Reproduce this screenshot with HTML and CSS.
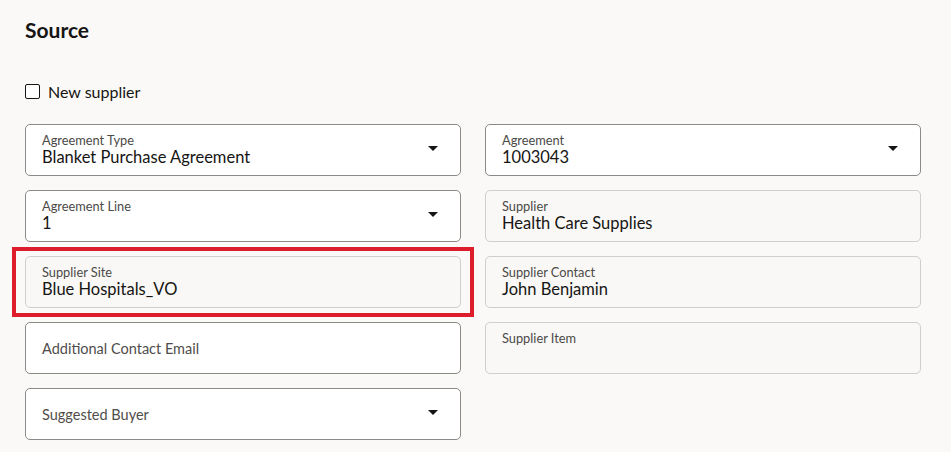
FILE: index.html
```html
<!DOCTYPE html>
<html lang="en">
<head>
  <meta charset="UTF-8">
  <meta name="viewport" content="width=device-width, initial-scale=1.0">
  <title>Source</title>
  <link rel="stylesheet" href="styles.css">
</head>
<body>
  <div class="page">
    <h1>Source</h1>
    <label class="check">
      <span class="box"></span>
      New supplier
    </label>
    <section class="fields">
      <div class="field select">
        <div class="text">
          <span class="label">Agreement Type</span>
          <span class="value">Blanket Purchase Agreement</span>
        </div>
        <span class="arrow"></span>
      </div>
      <div class="field select">
        <div class="text">
          <span class="label">Agreement</span>
          <span class="value">1003043</span>
        </div>
        <span class="arrow"></span>
      </div>
      <div class="field select">
        <div class="text">
          <span class="label">Agreement Line</span>
          <span class="value">1</span>
        </div>
        <span class="arrow"></span>
      </div>
      <div class="field readonly">
        <div class="text">
          <span class="label">Supplier</span>
          <span class="value">Health Care Supplies</span>
        </div>
      </div>
      <div class="field readonly marked">
        <div class="text">
          <span class="label">Supplier Site</span>
          <span class="value">Blue Hospitals_VO</span>
        </div>
      </div>
      <div class="field readonly">
        <div class="text">
          <span class="label">Supplier Contact</span>
          <span class="value">John Benjamin</span>
        </div>
      </div>
      <div class="field empty">
        <span class="placeholder">Additional Contact Email</span>
      </div>
      <div class="field readonly">
        <div class="text">
          <span class="label">Supplier Item</span>
        </div>
      </div>
      <div class="field empty select">
        <span class="placeholder">Suggested Buyer</span>
        <span class="arrow"></span>
      </div>
    </section>
  </div>
</body>
</html>
```

FILE: styles.css
```css
body {
  margin: 0;
  background-color: #faf9f8;
  color: #161513;
  font-family: Lato, "Liberation Sans", sans-serif;
}
.page {
  padding: 16px 30px 0 25px;
}
h1 {
  margin: 0;
  font-size: 21px;
  line-height: 28px;
  font-weight: 700;
}
.check {
  display: flex;
  align-items: center;
  gap: 8px;
  height: 24px;
  margin-top: 35px;
  font-size: 16px;
}
.box {
  width: 13px;
  height: 13px;
  border: 1.5px solid #161513;
  border-radius: 2px;
  background-color: white;
}
.fields {
  display: grid;
  grid-template-columns: 436px 436px;
  grid-auto-rows: 52px;
  column-gap: 24px;
  row-gap: 14px;
  margin-top: 21px;
}
.field {
  display: flex;
  align-items: flex-start;
  box-sizing: border-box;
  border: 1px solid #8c8a86;
  border-radius: 5px;
  background-color: white;
  padding: 0 22px 0 16px;
}
.field.empty {
  align-items: center;
}
.field.readonly {
  background-color: #f9f8f6;
  border-color: #d1cfcb;
}
.text {
  flex: 1;
  display: flex;
  flex-direction: column;
  padding-top: 8px;
}
.label {
  font-size: 12.8px;
  line-height: 14px;
  color: #4b4a47;
}
.value {
  font-size: 16.5px;
  line-height: 20px;
}
.placeholder {
  flex: 1;
  font-size: 14.5px;
  color: #4f4d4a;
}
.arrow {
  align-self: center;
  width: 0;
  height: 0;
  border-left: 5px solid transparent;
  border-right: 5px solid transparent;
  border-top: 5px solid #161513;
  margin-top: -3px;
}
.marked {
  position: relative;
}
.marked::after {
  content: "";
  position: absolute;
  top: -10px;
  bottom: -10px;
  left: -14px;
  right: -14px;
  border: 4px solid #dd1d2b;
}
```
